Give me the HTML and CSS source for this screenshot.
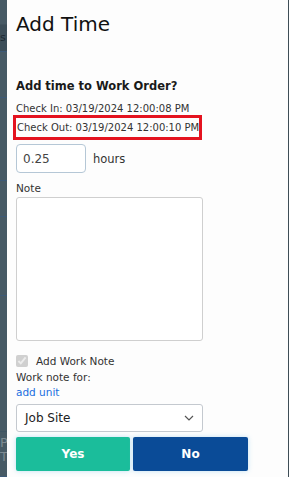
FILE: index.html
```html
<!DOCTYPE html>
<html lang="en">
<head>
    <meta charset="UTF-8">
    <meta name="viewport" content="width=device-width, initial-scale=1.0">
    <title>Add Time</title>
    <link rel="stylesheet" href="styles.css">
</head>
<body>
<div class="screen">
    <div class="backdrop">
        <div class="bg-row r1"></div>
        <div class="bg-row r2">s</div>
        <div class="bg-row r3"></div>
        <div class="bg-row r4"></div>
        <div class="bg-row r5"></div>
        <div class="bg-row r6"></div>
        <div class="bg-row r7"></div>
        <div class="bg-row r8">P<br>T</div>
    </div>
    <div class="modal">
        <h2 class="modal-title">Add Time</h2>
        <div class="question">Add time to Work Order?</div>
        <div class="stamp">Check In: 03/19/2024 12:00:08 PM</div>
        <div class="stamp highlight">Check Out: 03/19/2024 12:00:10 PM</div>
        <div class="hours-row">
            <input type="text" class="hours-input" value="0.25">
            <span>hours</span>
        </div>
        <label class="field-label" for="note">Note</label>
        <textarea id="note" class="note"></textarea>
        <div class="check-row">
            <input type="checkbox" checked disabled>
            <span>Add Work Note</span>
        </div>
        <div class="small-text">Work note for:</div>
        <a class="link" href="#">add unit</a>
        <div class="select">
            <span>Job Site</span>
            <svg width="10" height="6" viewBox="0 0 10 6"><path d="M1 1l4 4 4-4" fill="none" stroke="#555" stroke-width="1.2"/></svg>
        </div>
        <div class="buttons">
            <button class="btn btn-yes">Yes</button>
            <button class="btn btn-no">No</button>
        </div>
    </div>
    <div class="edge"></div>
</div>
</body>
</html>
```

FILE: styles.css
```css
body {
    margin: 0;
    font-family: "DejaVu Sans", Arial, sans-serif;
    background-color: #435762;
    overflow: hidden;
}
.screen {
    display: flex;
    height: 477px;
}
.backdrop {
    width: 7px;
    display: flex;
    flex-direction: column;
    overflow: hidden;
}
.bg-row {
    background-color: #475a65;
    border-bottom: 1px solid #3d5a78;
    color: #1d2a33;
    font-size: 11px;
}
.r1 { height: 24px; border-bottom-color: #41535e; }
.r2 { height: 27px; background-color: #3c4e59; padding-top: 6px; box-sizing: border-box; }
.r3 { height: 45px; }
.r4 { height: 82px; }
.r5 { height: 35px; }
.r6 { height: 78px; }
.r7 { height: 135px; border-bottom-color: #3f5563; }
.r8 { flex: 1; color: #7d8a92; font-size: 13px; line-height: 14px; padding-top: 4px; }
.modal {
    width: 281px;
    background-color: #fdfdfd;
    padding: 0 9px;
    box-sizing: border-box;
    color: #222;
}
.edge {
    width: 1px;
    background-color: #3e4d56;
}
.modal-title {
    font-size: 20px;
    font-weight: normal;
    margin: 12px 0 0;
    line-height: 24px;
    color: #111;
}
.question {
    font-size: 11.5px;
    font-weight: bold;
    margin-top: 42px;
    line-height: 16px;
    color: #1a1a1a;
}
.stamp {
    font-size: 10px;
    line-height: 13px;
    color: #333;
    white-space: nowrap;
}
.question + .stamp {
    margin-top: 8px;
}
.highlight {
    border: 3px solid #e4131f;
    margin-left: -3px;
    width: 189px;
    box-sizing: border-box;
    padding: 3px 1px 3px;
    line-height: 13px;
}
.hours-row {
    display: flex;
    align-items: center;
    gap: 7px;
    margin-top: 4px;
    font-size: 11.5px;
    color: #333;
}
.hours-input {
    width: 70px;
    height: 29px;
    box-sizing: border-box;
    border: 1px solid #b5c7d6;
    border-radius: 4px;
    padding: 0 6px;
    font-family: inherit;
    font-size: 12px;
    color: #444;
    background: #fff;
}
.field-label {
    display: block;
    font-size: 10.5px;
    color: #333;
    margin-top: 8px;
    line-height: 14px;
}
.note {
    display: block;
    width: 187px;
    height: 144px;
    box-sizing: border-box;
    border: 1px solid #cfcfcf;
    border-radius: 3px;
    margin-top: 2px;
    resize: none;
    background: #fff;
}
.check-row {
    display: flex;
    align-items: center;
    gap: 8px;
    margin-top: 14px;
    font-size: 10.5px;
    color: #333;
}
.check-row input {
    margin: 0;
    width: 12px;
    height: 12px;
}
.small-text {
    font-size: 10.5px;
    color: #333;
    margin-top: 3px;
    line-height: 14px;
}
.link {
    display: block;
    font-size: 10.5px;
    color: #1a6fe0;
    text-decoration: none;
    line-height: 15px;
    margin-top: 1px;
}
.select {
    display: flex;
    align-items: center;
    justify-content: space-between;
    width: 187px;
    height: 28px;
    box-sizing: border-box;
    border: 1px solid #c4c9cf;
    border-radius: 3px;
    margin-top: 4px;
    padding: 0 8px 0 8px;
    font-size: 12px;
    color: #222;
    background: #fff;
}
.buttons {
    display: flex;
    gap: 3px;
    margin-top: 5px;
}
.btn {
    height: 34px;
    border: none;
    border-radius: 2px;
    color: #fff;
    font-family: inherit;
    font-weight: bold;
    font-size: 12px;
    box-shadow: 0 0 5px rgba(120, 190, 230, 0.45);
}
.btn-yes {
    width: 114px;
    background-color: #1bbd9b;
}
.btn-no {
    width: 115px;
    background-color: #0a4b97;
}
```
